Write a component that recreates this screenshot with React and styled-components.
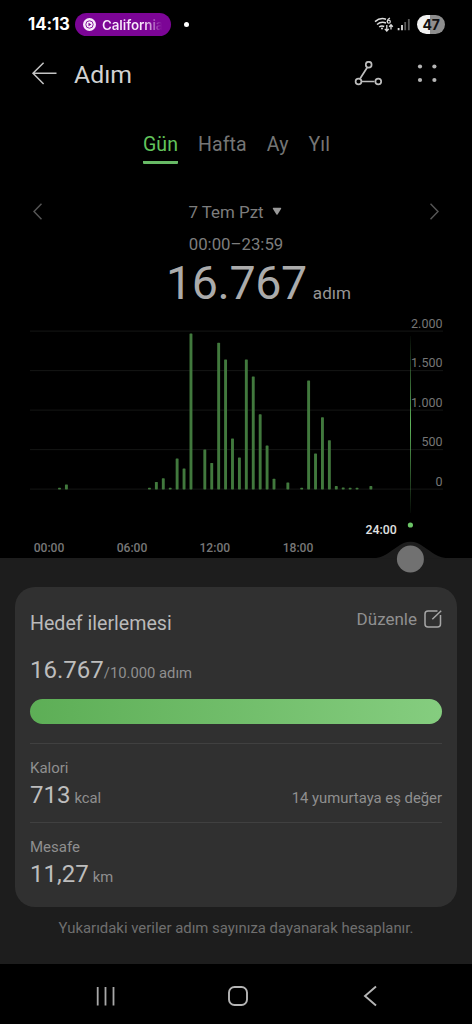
import React from 'react'
import styled, { createGlobalStyle } from 'styled-components'

const GlobalStyle = createGlobalStyle`
    * { box-sizing: border-box; }
    body {
        margin: 0;
        background: #000;
        font-family: Roboto, sans-serif;
    }
`
const Screen = styled.div`
    width: 472px;
    height: 1024px;
    display: flex;
    flex-direction: column;
    background: #000;
    overflow: hidden;
`
const StatusBar = styled.div`
    height: 48px;
    padding: 1px 27px 0 28px;
    display: flex;
    align-items: center;
    font-family: Inter, sans-serif;
`
const Clock = styled.span`
    width: 47px;
    font-size: 16.8px;
    font-weight: 700;
    color: #fff;
    letter-spacing: -0.1px;
    white-space: nowrap;
`
const Pill = styled.div`
    width: 96px;
    height: 23px;
    padding: 0 0 0 8px;
    display: flex;
    align-items: center;
    gap: 6px;
    border-radius: 12px;
    background: #7c0596;
`
const PillText = styled.span`
    width: 69px;
    padding-top: 1px;
    white-space: nowrap;
    font-size: 13.4px;
    font-weight: 600;
    line-height: 20px;
    letter-spacing: -0.1px;
    color: transparent;
    background: linear-gradient(90deg, #f7e9fa 42px, #7c0596 60px);
    background-clip: text;
`
const Dot = styled.span`
    width: 5px;
    height: 5px;
    margin-left: 13px;
    border-radius: 50%;
    background: #fff;
`
const Spacer = styled.div`
    flex: 1;
`
const Battery = styled.div`
    width: 28px;
    height: 19px;
    margin-left: 6px;
    border-radius: 10px;
    background: linear-gradient(90deg, #f2f2f2 46%, #8e8e8e 46%);
    color: #111;
    font-size: 14px;
    font-weight: 700;
    line-height: 19px;
    text-align: center;
    letter-spacing: -0.3px;
`
const Header = styled.header`
    height: 53px;
    padding: 0 35px 0 31px;
    display: flex;
    align-items: center;
`
const Title = styled.h1`
    margin: 1px 0 0 17px;
    font-size: 24.8px;
    font-weight: 400;
    color: #d2d2d2;
`
const MenuDots = styled.svg`
    margin-left: 35px;
`
const Tabs = styled.nav`
    margin-top: 31px;
    padding-left: 1px;
    display: flex;
    justify-content: center;
    gap: 20px;
    height: 32px;
`
const Tab = styled.span`
    height: 32px;
    font-size: 19.5px;
    line-height: 25px;
    letter-spacing: 0.1px;
    color: ${props => props.$active ? '#62c45c' : '#757575'};
    border-bottom: 3px solid ${props => props.$active ? '#68ba66' : 'transparent'};
    border-radius: 1px;
`
const DateRow = styled.div`
    margin-top: 37px;
    height: 22px;
    padding: 0 33px;
    display: flex;
    align-items: center;
    justify-content: space-between;
`
const DateLabel = styled.div`
    margin-right: 2px;
    display: flex;
    align-items: center;
    gap: 8px;
    font-size: 16.9px;
    line-height: 22px;
    color: #7d7d7d;
`
const Range = styled.div`
    margin-top: 10px;
    font-size: 16.8px;
    line-height: 23px;
    height: 22px;
    text-align: center;
    color: #7d7d7d;
`
const Total = styled.div`
    height: 56px;
    padding-left: 45px;
    display: flex;
    justify-content: center;
    align-items: baseline;
    gap: 6px;
    font-size: 46.6px;
    letter-spacing: -0.4px;
    line-height: 56px;
    color: #ababab;
`
const TotalUnit = styled.span`
    font-size: 17.1px;
    letter-spacing: 0;
    color: #969696;
`
const ChartArea = styled.div`
    height: 247px;
    position: relative;
`
const ChartSvg = styled.svg`
    display: block;
    overflow: visible;
    position: relative;
    z-index: 1;
    font-family: Roboto, sans-serif;
`
const Sheet = styled.main`
    height: 407px;
    padding: 29px 15px 0;
    background: #1d1d1d;
`
const Card = styled.section`
    height: 320px;
    padding: 21px 15px 0;
    border-radius: 20px;
    background: #303030;
`
const CardHead = styled.div`
    height: 33px;
    display: flex;
    justify-content: space-between;
`
const CardTitle = styled.h2`
    margin: 0;
    font-size: 19.6px;
    font-weight: 400;
    line-height: 32px;
    color: #bababa;
`
const Edit = styled.div`
    display: flex;
    align-items: center;
    gap: 7px;
    height: 23px;
    font-size: 17px;
    color: #909090;
`
const ValueRow = styled.div`
    height: 32px;
    margin-top: ${props => props.$top || 0}px;
    display: flex;
    align-items: baseline;
    line-height: 34px;
`
const Value = styled.span`
    font-size: 24px;
    color: #bdbdbd;
`
const Unit = styled.span`
    margin-left: ${props => props.$gap || 0}px;
    font-size: 14.8px;
    color: #8f8f8f;
`
const Note = styled.span`
    margin-left: auto;
    font-size: 14.85px;
    color: #8f8f8f;
`
const Progress = styled.div`
    height: 25px;
    margin-top: 14px;
    border-radius: 13px;
    background: linear-gradient(90deg, #5dae56, #85cd7f);
`
const Divider = styled.div`
    height: 1px;
    margin-top: ${props => props.$top}px;
    background: #404040;
`
const Label = styled.div`
    margin-top: 14px;
    height: 20px;
    font-size: 15px;
    line-height: 20px;
    color: #8f8f8f;
`
const Footnote = styled.p`
    margin: 10px 0 0;
    font-size: 14.9px;
    line-height: 22px;
    text-align: center;
    white-space: nowrap;
    color: #6f6f6f;
`
const NavBar = styled.footer`
    height: 60px;
    padding: 3px 94px 0 94px;
    display: flex;
    align-items: center;
    justify-content: space-between;
`
const HomeIcon = styled.svg`
    margin-right: 3px;
`

// half-hour slots of the day, [slot, steps]
const steps = [
    [2, 20], [3, 62], [15, 20], [16, 95], [17, 140], [18, 20], [19, 392],
    [20, 265], [21, 1975], [23, 506], [24, 335], [25, 1855], [26, 1645],
    [27, 645], [28, 405], [29, 1645], [30, 1430], [31, 950], [32, 557],
    [33, 134], [35, 88], [37, 20], [38, 1380], [39, 456], [40, 912],
    [41, 622], [42, 42], [43, 25], [44, 20], [45, 20], [47, 42],
]
const yTicks = ['2.000', '1.500', '1.000', '500', '0']
const xTicks = [['00:00', 49], ['06:00', 132], ['12:00', 214.8], ['18:00', 298]]
const BASE = 178

const Chart = () => (
    <ChartArea>
        <ChartSvg width="472" height="247" viewBox="0 0 472 247">
            <defs>
                <linearGradient id="cursor" x1="0" y1="25" x2="0" y2="202" gradientUnits="userSpaceOnUse">
                    <stop offset="0" stopColor="#5fb45b" stopOpacity="0.05" />
                    <stop offset="0.5" stopColor="#5fb45b" />
                    <stop offset="1" stopColor="#5fb45b" stopOpacity="0.05" />
                </linearGradient>
            </defs>
            {yTicks.map((tick, i) => (
                <g key={tick}>
                    <rect x="30" y={19.6 + i * 39.5} width="413" height="1" fill="#141614" />
                    <text x="442.5" y={16.6 + i * 39.5} fontSize="12.5" textAnchor="end" fill="#767676">{tick}</text>
                </g>
            ))}
            {steps.map(([slot, count]) => {
                const h = count * 0.079
                return <rect key={slot} x={44.2 + slot * 6.92} y={BASE + 0.4 - h} width="2.9" height={h} rx="0.6" fill="#41793d" />
            })}
            {xTicks.map(([label, x]) => (
                <text key={label} x={x} y="241" fontSize="12.1" fontWeight="500" textAnchor="middle" fill="#777">{label}</text>
            ))}
            <text x="396.7" y="222.6" fontSize="12.3" fontWeight="500" textAnchor="end" fill="#e2e2e2">24:00</text>
            <rect x="410" y="25" width="1" height="177" fill="url(#cursor)" />
            <circle cx="410.4" cy="214" r="2.6" fill="#6cc567" />
            <path d="M372 247.5 C384 247 389 241 397 236 Q410.5 225.5 424 236 C432 241 437 247 450 247.5 Z" fill="#1d1d1d" />
            <circle cx="410.4" cy="248" r="13.5" fill="#717171" />
        </ChartSvg>
    </ChartArea>
)

const App = () => {
    return (
        <>
            <GlobalStyle />
            <Screen>
                <StatusBar>
                    <Clock>14:13</Clock>
                    <Pill>
                        <svg width="13" height="13" viewBox="0 0 13 13">
                            <circle cx="6.5" cy="6.5" r="6.5" fill="#f7eafa" />
                            <circle cx="6.5" cy="6.5" r="3.7" fill="none" stroke="#7c0596" strokeWidth="0.9" />
                            <path d="M5.5 4.7 L8.4 6.5 L5.5 8.3 Z" fill="#7c0596" />
                        </svg>
                        <PillText>California</PillText>
                    </Pill>
                    <Dot />
                    <Spacer />
                    <svg width="37" height="17" viewBox="0 0 37 17" fill="none" stroke="#dedede">
                        <path d="M1 5.6 Q6 1.2 12 3.2 M3 8.5 Q7 5.1 12 7 M5.2 11 Q7.5 9.2 10.2 10.5" strokeWidth="1.5" />
                        <circle cx="8" cy="12.5" r="1" fill="#dedede" stroke="none" />
                        <path d="M16 2 Q13.3 3 13.3 5.7" strokeWidth="1.2" />
                        <circle cx="14.8" cy="5.7" r="1.5" strokeWidth="1.2" />
                        <path d="M12.8 9 V14.8 M10.8 12.9 L12.8 15 L14.8 12.9 M17 13.5 V9 M15.2 10.7 L17 8.8 L18.8 10.7" strokeWidth="1.3" />
                        <path d="M24.6 12 V14.2 M28 9 V14.2" strokeWidth="1.8" />
                        <path d="M31.2 6 V14.2 M34.8 3 V14.2" stroke="#5a5a5a" strokeWidth="1.8" />
                    </svg>
                    <Battery>47</Battery>
                </StatusBar>
                <Header>
                    <svg width="26" height="26" viewBox="0 0 26 26" fill="none" stroke="#c4c4c4" strokeWidth="1.5">
                        <path d="M12.6 1.7 L2 12.3 L12.6 23 M2 12.3 H25.5" />
                    </svg>
                    <Title>Adım</Title>
                    <Spacer />
                    <svg width="28" height="26" viewBox="0 0 28 26" fill="none" stroke="#bdbdbd" strokeWidth="1.7">
                        <path d="M13.2 6.5 L6 17.8 M8 20.5 H20.5" />
                        <circle cx="14.7" cy="3.7" r="2.9" />
                        <circle cx="4.5" cy="20.5" r="2.9" />
                        <circle cx="24.3" cy="20.5" r="2.9" />
                    </svg>
                    <MenuDots width="20" height="20" viewBox="0 0 20 20" fill="#b5b5b5">
                        <circle cx="3" cy="2.5" r="2.1" />
                        <circle cx="17.4" cy="2.5" r="2.1" />
                        <circle cx="3" cy="16" r="2.1" />
                        <circle cx="17.4" cy="16" r="2.1" />
                    </MenuDots>
                </Header>
                <Tabs>
                    <Tab $active>Gün</Tab>
                    <Tab>Hafta</Tab>
                    <Tab>Ay</Tab>
                    <Tab>Yıl</Tab>
                </Tabs>
                <DateRow>
                    <svg width="9" height="18" viewBox="0 0 9 18" fill="none" stroke="#555" strokeWidth="1.5">
                        <path d="M8.5 0.8 L1 8.5 L8.5 16.2" />
                    </svg>
                    <DateLabel>
                        7 Tem Pzt
                        <svg width="10" height="9" viewBox="0 0 10 9">
                            <path d="M1.5 0.8 H8.5 Q9.7 0.8 9 2 L5.7 7.3 Q5 8.3 4.3 7.3 L1 2 Q0.3 0.8 1.5 0.8 Z" fill="#999" />
                        </svg>
                    </DateLabel>
                    <svg width="9" height="18" viewBox="0 0 9 18" fill="none" stroke="#555" strokeWidth="1.5">
                        <path d="M0.5 0.8 L8 8.5 L0.5 16.2" />
                    </svg>
                </DateRow>
                <Range>00:00–23:59</Range>
                <Total>
                    16.767
                    <TotalUnit>adım</TotalUnit>
                </Total>
                <Chart />
                <Sheet>
                    <Card>
                        <CardHead>
                            <CardTitle>Hedef ilerlemesi</CardTitle>
                            <Edit>
                                Düzenle
                                <svg width="18" height="19" viewBox="0 0 18 19" fill="none" stroke="#a6a6a6" strokeWidth="1.5">
                                    <path d="M13.5 1 H4 Q1 1 1 4 V14 Q1 17 4 17 H13.5 Q16.5 17 16.5 14 V5 M8.3 9.2 L17.2 0.7" />
                                </svg>
                            </Edit>
                        </CardHead>
                        <ValueRow $top={12}>
                            <Value>16.767</Value>
                            <Unit>/10.000 adım</Unit>
                        </ValueRow>
                        <Progress />
                        <Divider $top={19} />
                        <Label>Kalori</Label>
                        <ValueRow>
                            <Value>713</Value>
                            <Unit $gap={4}>kcal</Unit>
                            <Note>14 yumurtaya eş değer</Note>
                        </ValueRow>
                        <Divider $top={12} />
                        <Label>Mesafe</Label>
                        <ValueRow>
                            <Value>11,27</Value>
                            <Unit $gap={4}>km</Unit>
                        </ValueRow>
                    </Card>
                    <Footnote>Yukarıdaki veriler adım sayınıza dayanarak hesaplanır.</Footnote>
                </Sheet>
                <NavBar>
                    <svg width="22" height="22" viewBox="0 0 22 22" fill="none" stroke="#a8a8a8" strokeWidth="1.8">
                        <path d="M3.7 2 V20.5 M11.5 2 V20.5 M19.5 2 V20.5" />
                    </svg>
                    <HomeIcon width="22" height="22" viewBox="0 0 22 22" fill="none" stroke="#b5b5b5" strokeWidth="1.9">
                        <rect x="2" y="2" width="18" height="18" rx="5.5" />
                    </HomeIcon>
                    <svg width="16" height="22" viewBox="0 0 16 22" fill="none" stroke="#b5b5b5" strokeWidth="1.9">
                        <path d="M14 1.5 L3 11 L14 20.5" />
                    </svg>
                </NavBar>
            </Screen>
        </>
    )
}

export default App
